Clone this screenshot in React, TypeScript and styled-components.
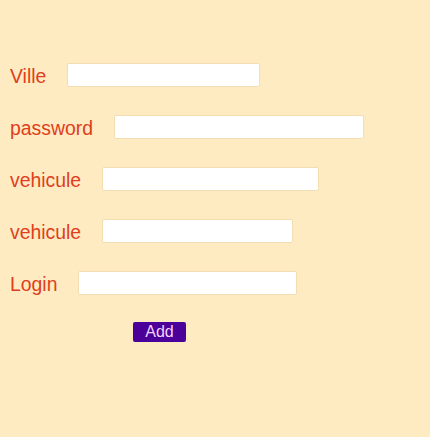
import React from "react";
import styled, { createGlobalStyle } from "styled-components";

const Global = createGlobalStyle`
  html, body {
    margin: 0;
    padding: 0;
    background: #ffebc2;
    font-family: "Liberation Sans", Arial, sans-serif;
  }
`;

const Page = styled.div`
  min-height: 437px;
  background: #ffebc2;
  padding: 63px 0 0 10px;
  box-sizing: border-box;
`;

const Form = styled.form`
  display: flex;
  flex-direction: column;
  gap: 28px;
`;

const Row = styled.div`
  display: flex;
  align-items: center;
  height: 24px;
`;

const Label = styled.label`
  color: #e03e1c;
  font-size: 19.4px;
  margin-right: 21px;
  padding-top: 3px;
`;

const Input = styled.input<{ $w: number }>`
  width: ${(p) => p.$w}px;
  height: 24px;
  box-sizing: border-box;
  background: #ffffff;
  border: 1px solid #f3deb2;
  border-radius: 2px;
  outline: none;
  padding: 0 4px;
`;

const Button = styled.button`
  margin: -1px 0 0 123px;
  width: 53px;
  height: 20px;
  background: #4a0099;
  color: #f2d4ff;
  border: none;
  border-radius: 2px;
  font-family: "Liberation Sans", Arial, sans-serif;
  font-size: 16px;
  padding: 0;
  line-height: 20px;
  align-self: flex-start;
`;

const fields = [
  { label: "Ville", w: 193, type: "text" },
  { label: "password", w: 250, type: "password" },
  { label: "vehicule", w: 217, type: "text" },
  { label: "vehicule", w: 191, type: "text" },
  { label: "Login", w: 219, type: "text" },
];

export default function App() {
  return (
    <Page>
      <Global />
      <Form onSubmit={(e) => e.preventDefault()}>
        {fields.map((f, i) => (
          <Row key={i}>
            <Label>{f.label}</Label>
            <Input $w={f.w} type={f.type} />
          </Row>
        ))}
        <Button type="submit">Add</Button>
      </Form>
    </Page>
  );
}
